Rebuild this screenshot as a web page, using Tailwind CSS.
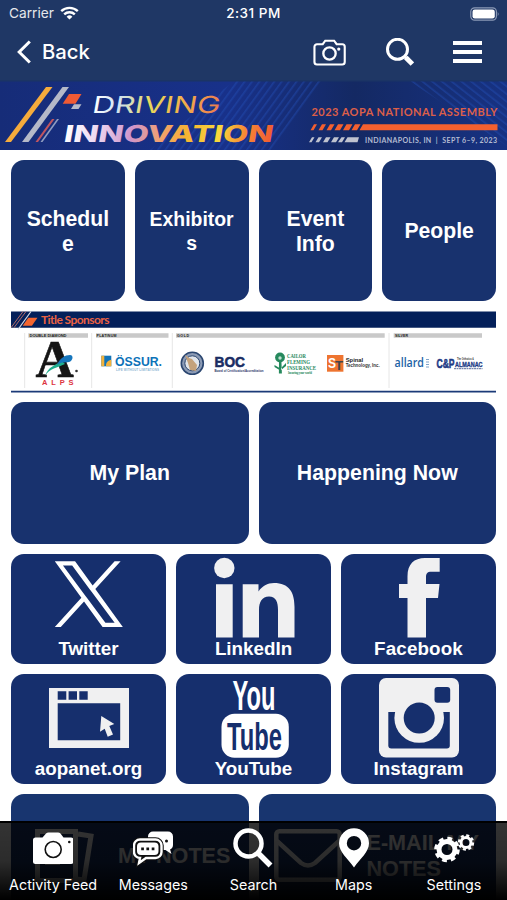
<!DOCTYPE html>
<html lang="en">
  <head>
    <meta charset="UTF-8" />
    <meta name="viewport" content="width=device-width, initial-scale=1.0" />
    <title>AOPA National Assembly</title>
    <script src="https://cdn.jsdelivr.net/npm/@tailwindcss/browser@4"></script>
  </head>
  <body class="bg-white">
    <div class="relative w-[507px] h-[900px] overflow-hidden bg-white font-['Liberation_Sans',sans-serif]">
      <header class="h-20 bg-[#1f3765] text-white font-['Inter',sans-serif]">
        <!-- status bar -->
        <div class="grid grid-cols-3 items-center h-[27px] pl-[9px] pr-[7px]">
          <div class="flex items-center gap-[6px] text-[13.7px] text-gray-200">
            <span>Carrier</span>
            <svg class="w-[19px] h-[14px]" viewBox="0 0 19 14" fill="none" stroke="#fff" stroke-width="2.4">
              <path d="M1.2 5.2a12 12 0 0 1 16.6 0" />
              <path d="M4.2 8.4a7.6 7.6 0 0 1 10.6 0" />
              <path d="M6.6 10.7a4.2 4.2 0 0 1 5.8 0L9.5 13.6z" fill="#fff" stroke="none" />
            </svg>
          </div>
          <div class="pr-[2px] text-center text-[13.5px] font-medium tracking-[.5px] whitespace-nowrap">2:31 PM</div>
          <svg class="justify-self-end w-[30px] h-[14px]" viewBox="0 0 31 14">
            <rect x=".8" y=".6" width="26.5" height="12.8" rx="4" fill="none" stroke="#8c9ab6" stroke-width="1.2" />
            <rect x="2.6" y="2.4" width="23" height="9.2" rx="2.4" fill="#fff" />
            <path d="M28.7 4.8q1.8 2.2 0 4.4z" fill="#8c9ab6" />
          </svg>
        </div>
        <!-- nav -->
        <nav class="flex items-center h-[50px] pl-[17px] pr-[25px]">
          <a href="#" class="flex items-center">
            <svg class="w-[15px] h-6" viewBox="0 0 15 24" fill="none" stroke="#fff" stroke-width="3">
              <path d="M12.8 1.5L2.2 12l10.6 10.5" />
            </svg>
            <span class="ml-[10px] text-[20.3px] font-medium">Back</span>
          </a>
          <svg class="ml-auto w-[33px] h-[27px]" viewBox="0 0 34 28" fill="none" stroke="#fff" stroke-width="2.2">
            <path d="M4 5.4h6l2.6-3.600h9.200l2.600 3.600h5.800a2.600 2.600 0 0 1 2.600 2.600v15.800a2.600 2.600 0 0 1-2.600 2.600H4a2.600 2.600 0 0 1-2.600-2.600V8A2.600 2.600 0 0 1 4 5.400z" />
            <circle cx="17" cy="15" r="6.400" stroke-width="2.400" />
            <circle cx="26.600" cy="10.400" r="1.700" fill="#fff" stroke="none" />
          </svg>
          <svg class="ml-[40px] w-7 h-7" viewBox="0 0 28 28" fill="none" stroke="#fff">
            <circle cx="11.500" cy="11.300" r="10" stroke-width="3" />
            <path d="M18.300 18.200l2.500 2.500" stroke-width="3" />
            <path d="M19.800 19.500l6.600 6.600" stroke-width="5" />
          </svg>
          <svg class="ml-[39px] w-[29px] h-6" viewBox="0 0 29 24" fill="#fff">
            <path d="M0 1h29v4H0zM0 10h29v4H0zM0 19h29v4H0z" />
          </svg>
        </nav>
      </header>

      <!-- event banner -->
      <svg class="block w-[507px] h-[70px]" viewBox="0 0 507 70">
        <defs>
          <linearGradient id="bg" x2="1">
            <stop offset="0" stop-color="#162c78" />
            <stop offset=".45" stop-color="#18318a" />
            <stop offset=".7" stop-color="#142963" />
            <stop offset="1" stop-color="#173283" />
          </linearGradient>
          <linearGradient id="driving" x2="1">
            <stop offset="0" stop-color="#fff" />
            <stop offset=".2" stop-color="#cfe3f3" />
            <stop offset=".45" stop-color="#e8d95a" />
            <stop offset=".7" stop-color="#f3b14a" />
            <stop offset="1" stop-color="#ec7a50" />
          </linearGradient>
          <linearGradient id="innovation" x2="1">
            <stop offset="0" stop-color="#fff" />
            <stop offset=".14" stop-color="#eedcf3" />
            <stop offset=".32" stop-color="#cf95cb" />
            <stop offset=".46" stop-color="#f0a070" />
            <stop offset=".58" stop-color="#f6b233" />
            <stop offset=".74" stop-color="#f7d93d" />
            <stop offset=".86" stop-color="#f58a35" />
            <stop offset="1" stop-color="#f05a33" />
          </linearGradient>
          <pattern id="up" width="6" height="6" patternUnits="userSpaceOnUse" patternTransform="rotate(36)">
            <path d="M0 0h1.6v6H0z" fill="#2450b8" opacity=".45" />
          </pattern>
          <pattern id="down" width="6" height="6" patternUnits="userSpaceOnUse" patternTransform="rotate(-52)">
            <path d="M0 0h1.6v6H0z" fill="#2450b8" opacity=".45" />
          </pattern>
        </defs>
        <path d="M0 0h507v70H0z" fill="url(#bg)" />
        <path d="M235 0h87l-49 70H150z" fill="url(#up)" />
        <path d="M408 0h99v66z" fill="url(#down)" />
        <path d="M0 0h507v1.500H0z" fill="#1b3465" />
        <path d="M46 7h6.500L11 62H5z" fill="#f6ab3c" />
        <path d="M62.500 7H69L28.500 62H22z" fill="#b5b9c8" />
        <path d="M52 39h2.500L38 62h-2.500z" fill="#c05560" />
        <path d="M57 39h2L42.500 62h-2z" fill="#8f9cc0" />
        <path d="M69 14h12.500l-6 9.700H62.700z" fill="#f05a33" />
        <path d="M74 24.300h7.500l-3 4.700H71z" fill="#b5b9c8" />
        <g font-family="Inter, sans-serif">
          <text x="97" y="33.300" font-size="23.400" font-weight="400" textLength="128" lengthAdjust="spacingAndGlyphs" fill="url(#driving)" transform="skewX(-10)">DRIVING</text>
          <text x="74" y="62.300" font-size="23.400" font-weight="800" textLength="209" lengthAdjust="spacingAndGlyphs" fill="url(#innovation)" transform="skewX(-10)">INNOVATION</text>
        </g>
        <g font-family="Lato, sans-serif">
          <text x="311.500" y="36" font-size="11" font-weight="700" textLength="186" fill="#dc5f49">2023 AOPA NATIONAL ASSEMBLY</text>
          <text x="365" y="62.500" font-size="7" font-weight="700" textLength="132" fill="#b4bcd2">INDIANAPOLIS, IN &#160;|&#160; SEPT 6–9, 2023</text>
        </g>
        <path d="M314 44.300h3l-3.500 6h-3zM322 44.300h4l-3.500 6h-4zM330 44.300h4.500l-3.500 6h-4.500zM338 44.300h5.500l-3.500 6h-5.500zM346.500 44.300h6l-3.500 6h-6zM355 44.300h5.500l-3.500 6h-5.500zM363 44.300h134.500v6h-138z" fill="#f4602f" />
        <path d="M312 57.300h2.500l-3 5H309zM318.500 57.300h3.500l-3 5h-3.500zM326 57.300h4.500l-3 5H323zM334 57.300h5l-3 5h-5zM341.500 57.300h3.500l-3 5h-4zM347.500 57.300H359l-1.500 5H344.500z" fill="#bfc3cf" />
      </svg>

      <main class="flex flex-col gap-[10px] px-[11px] pt-[10px] text-white font-bold text-center">
        <div class="grid grid-cols-4 gap-[10px] text-[21.2px] leading-[25px]">
          <a href="#" class="flex items-center justify-center h-[141px] rounded-[13px] bg-[#18326e]">Schedul<br />e</a>
          <a href="#" class="flex items-center justify-center h-[141px] pt-px rounded-[13px] bg-[#18326e] text-[19.4px] leading-6">Exhibitor<br />s</a>
          <a href="#" class="flex items-center justify-center h-[141px] rounded-[13px] bg-[#18326e]">Event<br />Info</a>
          <a href="#" class="flex items-center justify-center h-[141px] rounded-[13px] bg-[#18326e]">People</a>
        </div>

        <!-- sponsors -->
        <svg class="block w-[485px] h-[82px]" viewBox="0 0 485 82" font-family="Liberation Sans, sans-serif">
          <path d="M0 .500h485v16.200H0z" fill="#04205a" />
          <path d="M0 16.700L12 .500M3 16.700L15 .500" stroke="#b06a68" stroke-width="1" />
          <path d="M7 18.500L20 .500" stroke="#d9dce6" stroke-width="1.200" />
          <path d="M17.300 6.700h9.200l-5.600 8h-9.200z" fill="#f4652f" />
          <text x="30" y="13" font-family="Lato, sans-serif" font-size="12" font-weight="700" fill="#ea6242" textLength="68.500">Title Sponsors</text>
          <path d="M17.300 22.200H77v4.500H17.300zM85 22.200h72.500v4.500H85zM165 22.200h208.700v4.500H165zM382.700 22.200H471v4.500h-88.300z" fill="#c9c9c9" />
          <path d="M13.700 22v55M80.700 22v55M161.300 22v55M378 22v55" stroke="#e6e6e6" />
          <g font-size="3.600" font-weight="700" fill="#222">
            <text x="18.500" y="25.800" textLength="37" lengthAdjust="spacingAndGlyphs">DOUBLE DIAMOND</text>
            <text x="85.500" y="25.800" textLength="20">PLATINUM</text>
            <text x="166" y="25.800" textLength="12">GOLD</text>
            <text x="384" y="25.800" textLength="13">SILVER</text>
          </g>

          <text x="24.500" y="65.500" font-family="Liberation Serif, serif" font-size="53" fill="#151515" stroke="#151515" stroke-width=".6" textLength="38">A</text>
          <path d="M34 65c3-9 10-11 17-15l3 3c-8 4-15 4-20 12z" fill="#1fae8e" />
          <path d="M46 54c3-7 8-10 13-10 4 0 3 6-1 7-4 .5-8 0-12 3z" fill="#1676bd" />
          <circle cx="65.500" cy="60" r="1.300" fill="#333" />
          <text x="31" y="74" font-size="7.500" font-weight="700" fill="#dd3340" textLength="31.500">ALPS</text>

          <path d="M90.300 44.700h10v10.600h-10z" fill="#1173b8" />
          <path d="M90.300 44.700h3v10.600h-3zM95 55.300c0-4 2-6 5.300-6.500v6.500z" fill="#f2b23c" />
          <text x="104" y="55.300" font-size="12" font-weight="700" fill="#0c72b8" textLength="47" lengthAdjust="spacingAndGlyphs">ÖSSUR.</text>
          <text x="105" y="60.300" font-size="3" fill="#8fb6d3" textLength="43">LIFE WITHOUT LIMITATIONS</text>

          <circle cx="181.300" cy="52.300" r="11" fill="#8c9bb5" stroke="#2b4670" stroke-width="1.600" />
          <circle cx="181.300" cy="52.300" r="7.500" fill="#e1e5eb" stroke="#2b4670" />
          <path d="M174 44l4 3 3 1 5 6-1 6-6-1-2-7z" fill="#c4a27c" />
          <text x="203.500" y="55.500" font-size="15.500" font-weight="700" fill="#1a2d63" stroke="#1a2d63" stroke-width=".6" textLength="30.500" lengthAdjust="spacingAndGlyphs">BOC</text>
          <text x="203.500" y="60.800" font-size="3.600" font-weight="700" fill="#2b3568" textLength="49" lengthAdjust="spacingAndGlyphs">Board of Certification/Accreditation</text>

          <g fill="#26895d" font-family="Liberation Serif, serif">
            <circle cx="269" cy="46.500" r="4.900" />
            <path d="M268 50h2.400l.5 12.500h-3zM263.500 54l5 3v2l-5-3zM275 52l-5 5v2l5-4z" />
            <circle cx="269" cy="47" r="1.700" fill="#bfe0d0" />
            <text x="276" y="46.800" font-size="6.500" textLength="19" lengthAdjust="spacingAndGlyphs">CAILOR</text>
            <text x="276" y="53" font-size="6.500" textLength="23" lengthAdjust="spacingAndGlyphs">FLEMING</text>
            <text x="276" y="59" font-size="6.500" textLength="29" lengthAdjust="spacingAndGlyphs">INSURANCE</text>
            <text x="277" y="62.800" font-size="3" textLength="24">Insuring your world</text>
          </g>

          <path d="M316 44h16.400v16.700H316z" fill="#ee7430" />
          <text x="317" y="57" font-size="14" font-weight="700" fill="#fff" textLength="8" lengthAdjust="spacingAndGlyphs">S</text>
          <text x="324" y="58.500" font-size="12" font-weight="700" fill="#42444b" textLength="8" lengthAdjust="spacingAndGlyphs">T</text>
          <text x="334.700" y="50.500" font-size="5.800" font-weight="700" fill="#222" textLength="17.500" lengthAdjust="spacingAndGlyphs">Spinal</text>
          <text x="334.700" y="56.300" font-size="5.600" fill="#333" textLength="34" lengthAdjust="spacingAndGlyphs">Technology, Inc.</text>

          <text x="383.500" y="56.300" font-family="Open Sans, sans-serif" font-size="12" font-weight="600" fill="#1c62a5" textLength="29.500" lengthAdjust="spacingAndGlyphs">allard</text>
          <path d="M415 48.500h3M415 51h3M415 53.500h3M415 56h3" stroke="#7fa3c9" stroke-width="1.200" />
          <text x="425.500" y="56.700" font-size="13" font-weight="700" fill="#1d3a86" stroke="#1d3a86" stroke-width=".6" textLength="18" lengthAdjust="spacingAndGlyphs">C&amp;P</text>
          <text x="444" y="55.500" font-size="6.500" font-weight="700" fill="#1d3a86" stroke="#1d3a86" stroke-width=".3" textLength="27.500" lengthAdjust="spacingAndGlyphs">ALMANAC</text>
          <text x="446" y="48.500" font-size="2.800" font-weight="700" fill="#333" textLength="17" lengthAdjust="spacingAndGlyphs">The Orthotics &amp;</text>
          <path d="M443 57.700h28.500" stroke="#5b6d9c" stroke-width="1" stroke-dasharray="2 .5" />
          <path d="M0 79.800h485v1.700H0z" fill="#1b3a78" />
        </svg>

        <div class="grid grid-cols-2 gap-[10px] -mt-[1px] text-[21.3px]">
          <a href="#" class="flex items-center justify-center h-[141.500px] pt-[3px] rounded-[13px] bg-[#18326e]">My Plan</a>
          <a href="#" class="flex items-center justify-center h-[141.500px] pt-[3px] rounded-[13px] bg-[#18326e]">Happening Now</a>
        </div>

        <div class="grid grid-cols-3 gap-[10px] text-[18.8px] leading-[22px]">
          <a href="#" class="flex flex-col items-center h-[110px] pt-[4px] rounded-[13px] bg-[#162f6d]">
            <svg class="w-20 h-20" viewBox="0 0 80 80" fill="#fff">
              <path transform="translate(5.800 3.300) scale(.0567 .0535)" d="M714.163 519.284L1160.890 0H1055.030L667.137 450.887L357.328 0H0L468.492 681.821L0 1226.370H105.866L515.491 750.218L842.672 1226.370H1200L714.137 519.284H714.163ZM569.165 687.828L521.697 619.934L144.011 79.694H306.615L611.412 515.685L658.880 583.579L1055.080 1150.300H892.476L569.165 687.854V687.828Z" />
            </svg>
            <span>Twitter</span>
          </a>
          <a href="#" class="flex flex-col items-center h-[110px] pt-[4px] rounded-[13px] bg-[#162f6d]">
            <svg class="w-20 h-20 overflow-visible" viewBox="0 0 80 80" fill="#f0f0f1">
              <circle cx="10.300" cy="10" r="10.200" />
              <path d="M2 26.300h16.700V79.500H2z" />
              <path d="M28.700 26.300H44.500v7.300C48 28 53.500 25 60 25c15 0 20.500 9 20.500 24v30.500H64V52c0-8-2-13.500-9-13.500S45 44 45 52v27.500H28.700z" />
            </svg>
            <span>LinkedIn</span>
          </a>
          <a href="#" class="flex flex-col items-center h-[110px] pt-[4px] rounded-[13px] bg-[#162f6d]">
            <svg class="w-20 h-20" viewBox="0 0 80 80" fill="#f0f0f1">
              <path d="M28.500 79.500V40H20V26h8.500v-7.500C28.500 6 35 0 46 0h14.700v13.800h-8.200c-4.500 0-5.500 2-5.500 5.500V26h13.500L59 40H47v39.500z" />
            </svg>
            <span class="tracking-[.15px]">Facebook</span>
          </a>
          <a href="#" class="flex flex-col items-center h-[110px] pt-[4px] rounded-[13px] bg-[#162f6d]">
            <svg class="w-20 h-20" viewBox="0 0 80 80" fill="#f0f0f1">
              <path fill-rule="evenodd" d="M0 10h80v60H0zM8.700 13.300h8.600v8.500H8.700zM19.600 13.300h8.400v8.500h-8.400zM30.300 13.300h8.400v8.500h-8.400zM8.700 25.300h62.500v37H8.700z" />
              <path d="M52.300 38l13 8-5 2 3.700 8.500-5.300 2.300-3-8-4.700 3z" />
            </svg>
            <span>aopanet.org</span>
          </a>
          <a href="#" class="flex flex-col items-center h-[110px] pt-[4px] rounded-[13px] bg-[#162f6d]">
            <svg class="w-20 h-20 overflow-visible" viewBox="0 0 80 80" font-family="Liberation Sans, sans-serif" font-weight="700">
              <text x="18.500" y="31.500" font-size="43" fill="#fff" textLength="43" lengthAdjust="spacingAndGlyphs">You</text>
              <rect x="7.500" y="35.700" width="67.300" height="44" rx="13" fill="#fff" />
              <text x="13" y="71.500" font-size="39" fill="#162f6d" textLength="55" lengthAdjust="spacingAndGlyphs">Tube</text>
            </svg>
            <span>YouTube</span>
          </a>
          <a href="#" class="flex flex-col items-center h-[110px] pt-[4px] rounded-[13px] bg-[#162f6d]">
            <svg class="w-20 h-20" viewBox="0 0 80 80" fill="#f0f0f1">
              <rect width="80" height="79.500" rx="7" />
              <path d="M9.300 34h61.500v33.500a3 3 0 0 1-3 3H12.300a3 3 0 0 1-3-3z" fill="#162f6d" />
              <circle cx="40.200" cy="40" r="24.800" />
              <circle cx="40.200" cy="40" r="15.500" fill="#162f6d" />
              <rect x="55.500" y="9" width="15.700" height="15.700" rx="3" fill="#162f6d" />
            </svg>
            <span>Instagram</span>
          </a>
        </div>

        <div class="grid grid-cols-2 gap-[10px] text-[21.6px] leading-[26px]">
          <a href="#" class="flex items-center h-[124px] pl-[23px] rounded-[13px] bg-[#18356f]">
            <svg class="w-[60px] h-[56px]" viewBox="0 0 60 56" fill="none" stroke="#fff" stroke-width="5">
              <path d="M3.500 3.500h38v49h-38zM44 6l13 2-7 44-8-1" />
              <path d="M11 17h22M11 26h22M11 35h15" stroke-width="4" />
            </svg>
            <span class="ml-[24px]">MY NOTES</span>
          </a>
          <a href="#" class="flex items-center h-[124px] pl-[15px] rounded-[13px] bg-[#18356f]">
            <svg class="w-[68px] h-[53px]" viewBox="0 0 68 53" fill="none" stroke="#fff" stroke-width="4.500">
              <rect x="2.300" y="2.300" width="63.400" height="48.400" rx="3" />
              <path d="M3 12l24 22q7 5 14 0l24-22" />
            </svg>
            <span class="ml-[25px] text-left whitespace-nowrap">E-MAIL MY<br />NOTES</span>
          </a>
        </div>
      </main>

      <!-- tab bar, lies over the scrolling content -->
      <div class="absolute inset-x-0 bottom-0 grid grid-cols-5 h-[79px] px-[3px] pt-[5px] border-t-2 border-black bg-linear-to-b from-black/80 via-black/83 to-black text-white text-[14.300px] font-['Inter',sans-serif]">
        <a href="#" class="flex flex-col items-center">
          <svg class="w-10 h-10" viewBox="0 0 40 40" fill="#fff">
            <path d="M2.500 9.500H9.500L13 5.500q1-1 2.500-1h9.500q1.500 0 2.500 1l3 4h7.500a2.500 2.500 0 0 1 2.500 2.500v21.500a2.500 2.500 0 0 1-2.500 2.500h-35.500A2.500 2.500 0 0 1 0 33.500V12a2.500 2.500 0 0 1 2.500-2.500z" />
            <circle cx="20.200" cy="21.500" r="8" stroke="#111" stroke-width="1.600" />
            <circle cx="36.300" cy="14" r="1.300" fill="#111" />
          </svg>
          <span class="mt-[7px] leading-5 whitespace-nowrap">Activity Feed</span>
        </a>
        <a href="#" class="flex flex-col items-center">
          <svg class="w-10 h-10" viewBox="0 0 40 40" fill="#fff">
            <path d="M20 3.500h15a5 5 0 0 1 5 5V17a5 5 0 0 1-3 4.500l1.500 4.500-6-4H26l-11-10V8.500a5 5 0 0 1 5-5z" />
            <circle cx="33.500" cy="13" r="1.500" fill="#111" />
            <path d="M7 11.500h15.500a6 6 0 0 1 6 6v6.500a6 6 0 0 1-6 6H13l-7 5 1-5a6 6 0 0 1-6-6v-6.500a6 6 0 0 1 6-6z" fill="#111" stroke="#111" stroke-width="4.500" />
            <path d="M7 11.500h15.500a6 6 0 0 1 6 6v6.500a6 6 0 0 1-6 6H13l-7 5 1-5a6 6 0 0 1-6-6v-6.500a6 6 0 0 1 6-6z" fill="#111" stroke="#fff" stroke-width="2.400" />
            <rect x="4" y="14.500" width="21.500" height="12.500" rx="4" />
            <path d="M8.200 19.500h2.700v2.700H8.200zM13.400 19.500h2.700v2.700h-2.700zM18.700 19.500h2.700v2.700h-2.700z" fill="#111" />
          </svg>
          <span class="mt-[7px] leading-5">Messages</span>
        </a>
        <a href="#" class="flex flex-col items-center">
          <svg class="w-10 h-10" viewBox="0 0 40 40" fill="none" stroke="#fff">
            <circle cx="15.500" cy="15.500" r="13" stroke-width="4.500" />
            <path d="M24.500 24.500L37.500 37.500" stroke-width="5.500" />
          </svg>
          <span class="mt-[7px] leading-5">Search</span>
        </a>
        <a href="#" class="flex flex-col items-center">
          <svg class="w-10 h-10" viewBox="0 0 40 40" fill="#fff">
            <path fill-rule="evenodd" d="M20 .3a15 15 0 0 1 15 15C35 24 26 31 20 39.500 14 31 5 24 5 15.300a15 15 0 0 1 15-15zM20 8a7.200 7.200 0 1 0 0 14.400A7.200 7.200 0 0 0 20 8z" />
          </svg>
          <span class="mt-[7px] leading-5">Maps</span>
        </a>
        <a href="#" class="flex flex-col items-center">
          <!-- eight teeth on each gear -->
          <svg class="w-10 h-10 overflow-visible" viewBox="0 0 40 40" fill="none" stroke="#fff">
            <circle cx="13" cy="21.500" r="8" stroke-width="5" />
            <circle cx="13" cy="21.500" r="11.200" stroke-width="3.200" stroke-dasharray="4.800 3.996" />
            <circle cx="32" cy="14.500" r="5" stroke-width="3" />
            <circle cx="32" cy="14.500" r="7" stroke-width="2.400" stroke-dasharray="3 2.498" />
          </svg>
          <span class="mt-[7px] leading-5">Settings</span>
        </a>
      </div>
    </div>
  </body>
</html>
